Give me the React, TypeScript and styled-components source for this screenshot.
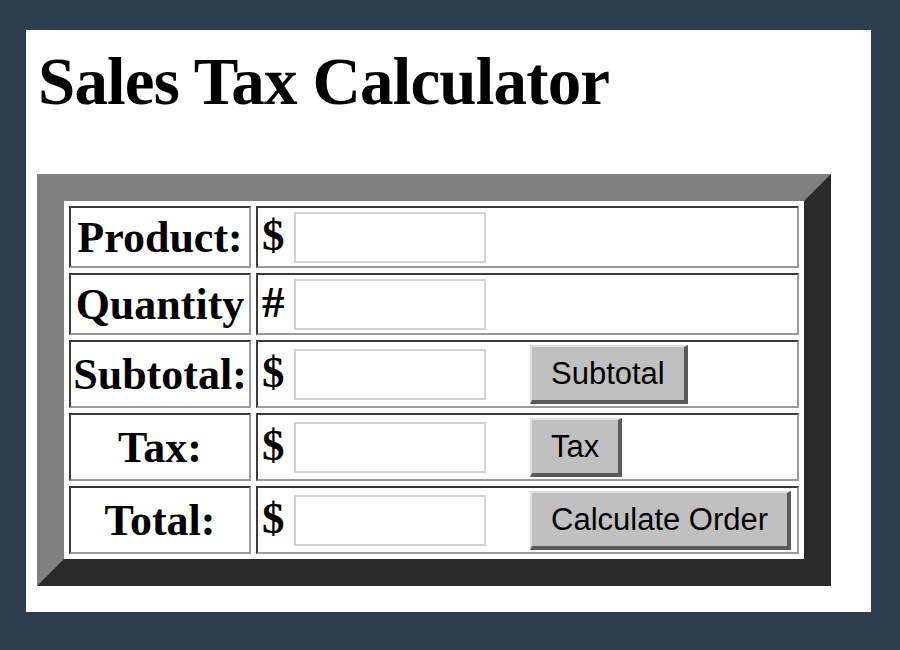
import React from "react";
import styled, { createGlobalStyle } from "styled-components";

const GlobalStyle = createGlobalStyle`
  html, body {
    margin: 0;
    padding: 0;
    background: #2d3e50;
  }
`;

type Row = {
  label: string;
  sign: string;
  button?: string;
};

const rows: Row[] = [
  { label: "Product:", sign: "$" },
  { label: "Quantity", sign: "#" },
  { label: "Subtotal:", sign: "$", button: "Subtotal" },
  { label: "Tax:", sign: "$", button: "Tax" },
  { label: "Total:", sign: "$", button: "Calculate Order" },
];

export default function App() {
  return (
    <>
      <GlobalStyle />
      <Page>
        <Panel>
          <Title>Sales Tax Calculator</Title>
          <CalcTable>
            <tbody>
              {rows.map((row) => (
                <TableRow key={row.label} tall={!!row.button}>
                  <LabelCell>{row.label}</LabelCell>
                  <FieldCell>
                    <FieldLine>
                      <Sign>{row.sign}</Sign>
                      <TextBox type="text" />
                      {row.button && <GrayButton>{row.button}</GrayButton>}
                    </FieldLine>
                  </FieldCell>
                </TableRow>
              ))}
            </tbody>
          </CalcTable>
        </Panel>
      </Page>
    </>
  );
}

const Page = styled.div`
  padding: 30px 29px 38px 26px;
`;

const Panel = styled.div`
  background: #ffffff;
  height: 582px;
  box-sizing: border-box;
  padding: 1px 11px 0;
`;

const Title = styled.h1`
  font-family: "Liberation Serif", "Times New Roman", serif;
  font-weight: bold;
  font-size: 67px;
  line-height: 74px;
  margin: 13px 0 0 1px;
  color: #000;
  letter-spacing: -0.85px;
`;

const CalcTable = styled.table`
  margin-top: 56px;
  width: 794px;
  border-collapse: separate;
  border-spacing: 5px;
  border-style: solid;
  border-width: 27px;
  border-color: #808080 #2a2a2a #2a2a2a #808080;
  box-sizing: border-box;
`;

const TableRow = styled.tr<{ tall: boolean }>`
  height: ${(p) => (p.tall ? "68px" : "62px")};
`;

const Cell = styled.td`
  border-style: solid;
  border-width: 2px;
  border-color: #3a3a3a #9a9a9a #9a9a9a #3a3a3a;
  padding: 0 4px;
`;

const LabelCell = styled(Cell)`
  width: 176px;
  text-align: center;
  vertical-align: middle;
  font-family: "Liberation Serif", "Times New Roman", serif;
  font-weight: bold;
  font-size: 44px;
  color: #000;
  white-space: nowrap;
  padding: 0 1px;
`;

const FieldCell = styled(Cell)`
  vertical-align: middle;
`;

const FieldLine = styled.div`
  display: flex;
  align-items: center;
`;

const Sign = styled.span`
  font-family: "Liberation Serif", "Times New Roman", serif;
  font-weight: bold;
  font-size: 45px;
  line-height: 45px;
  width: 32px;
  margin-top: -3px;
  color: #000;
`;

const TextBox = styled.input`
  width: 192px;
  height: 51px;
  box-sizing: border-box;
  border: 2px solid #d2d2d2;
  background: #fff;
  margin: 0;
  padding: 0;
  flex-shrink: 0;
`;

const GrayButton = styled.button`
  margin-left: 44px;
  flex-shrink: 0;
  white-space: nowrap;
  background: #c0c0c0;
  font-family: "Liberation Sans", Arial, sans-serif;
  font-size: 31px;
  line-height: 36px;
  color: #000;
  padding: 9px 19px 8px 19px;
  border-style: solid;
  border-width: 2px 4px 4px 2px;
  border-color: #e0e0e0 #5a5a5a #5a5a5a #e0e0e0;
  cursor: pointer;
`;
